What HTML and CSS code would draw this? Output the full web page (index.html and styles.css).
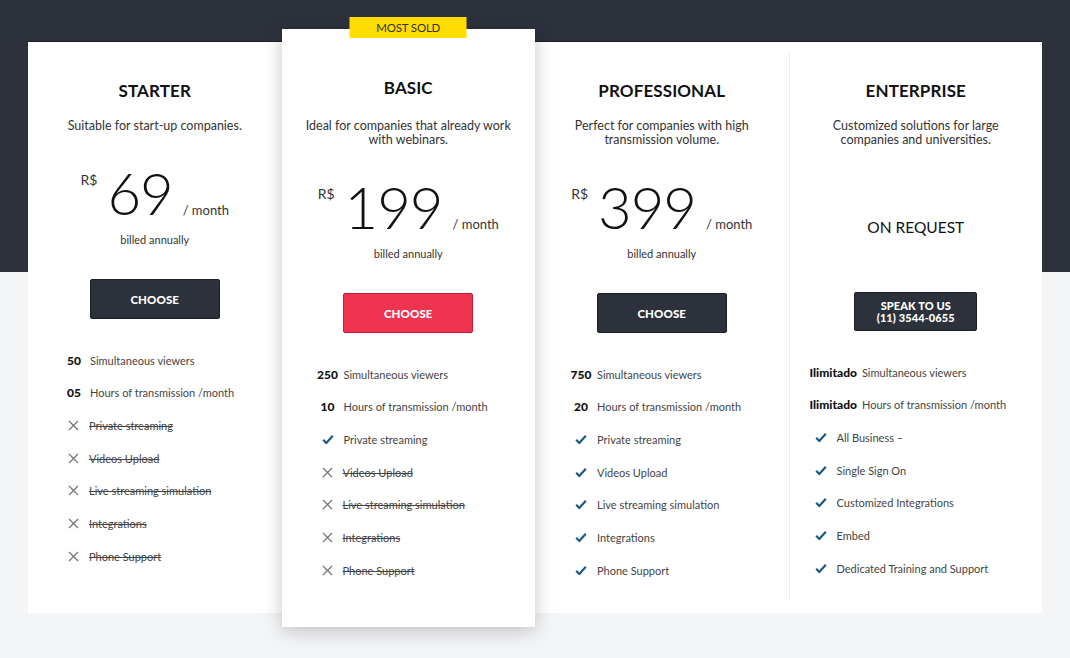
FILE: index.html
```html
<!DOCTYPE html>
<html lang="en">
<head>
<meta charset="utf-8">
<title>Pricing</title>
<link rel="stylesheet" href="styles.css">
</head>
<body>
<div class="page">
  <div class="plans">
    <section class="plan">
      <h2 class="plan-name">STARTER</h2>
      <p class="plan-desc">Suitable for start-up companies.</p>
      <div class="price"><span class="cur">R$</span><span class="amount">69</span><span class="per">/ month</span></div>
      <p class="billing">billed annually</p>
      <a class="btn btn-dark" href="#">CHOOSE</a>
      <ul class="features">
        <li><span class="num">50</span><span>Simultaneous viewers</span></li>
        <li><span class="num">05</span><span>Hours of transmission /month</span></li>
        <li class="off"><svg class="ico" viewBox="0 0 11 11"><path d="M1 1L10 10M10 1L1 10"/></svg><span>Private streaming</span></li>
        <li class="off"><svg class="ico" viewBox="0 0 11 11"><path d="M1 1L10 10M10 1L1 10"/></svg><span>Videos Upload</span></li>
        <li class="off"><svg class="ico" viewBox="0 0 11 11"><path d="M1 1L10 10M10 1L1 10"/></svg><span>Live streaming simulation</span></li>
        <li class="off"><svg class="ico" viewBox="0 0 11 11"><path d="M1 1L10 10M10 1L1 10"/></svg><span>Integrations</span></li>
        <li class="off"><svg class="ico" viewBox="0 0 11 11"><path d="M1 1L10 10M10 1L1 10"/></svg><span>Phone Support</span></li>
      </ul>
    </section>

    <section class="plan plan-featured">
      <div class="badge">MOST SOLD</div>
      <h2 class="plan-name">BASIC</h2>
      <p class="plan-desc">Ideal for companies that already work<br>with webinars.</p>
      <div class="price"><span class="cur">R$</span><span class="amount">199</span><span class="per">/ month</span></div>
      <p class="billing">billed annually</p>
      <a class="btn btn-red" href="#">CHOOSE</a>
      <ul class="features">
        <li><span class="num">250</span><span>Simultaneous viewers</span></li>
        <li><span class="num">10</span><span>Hours of transmission /month</span></li>
        <li class="on"><svg class="ico" viewBox="0 0 12 11"><path d="M1.2 5.8L4.3 9L10.8 1.8"/></svg><span>Private streaming</span></li>
        <li class="off"><svg class="ico" viewBox="0 0 11 11"><path d="M1 1L10 10M10 1L1 10"/></svg><span>Videos Upload</span></li>
        <li class="off"><svg class="ico" viewBox="0 0 11 11"><path d="M1 1L10 10M10 1L1 10"/></svg><span>Live streaming simulation</span></li>
        <li class="off"><svg class="ico" viewBox="0 0 11 11"><path d="M1 1L10 10M10 1L1 10"/></svg><span>Integrations</span></li>
        <li class="off"><svg class="ico" viewBox="0 0 11 11"><path d="M1 1L10 10M10 1L1 10"/></svg><span>Phone Support</span></li>
      </ul>
    </section>

    <section class="plan">
      <h2 class="plan-name">PROFESSIONAL</h2>
      <p class="plan-desc">Perfect for companies with high<br>transmission volume.</p>
      <div class="price"><span class="cur">R$</span><span class="amount">399</span><span class="per">/ month</span></div>
      <p class="billing">billed annually</p>
      <a class="btn btn-dark" href="#">CHOOSE</a>
      <ul class="features">
        <li><span class="num">750</span><span>Simultaneous viewers</span></li>
        <li><span class="num">20</span><span>Hours of transmission /month</span></li>
        <li class="on"><svg class="ico" viewBox="0 0 12 11"><path d="M1.2 5.8L4.3 9L10.8 1.8"/></svg><span>Private streaming</span></li>
        <li class="on"><svg class="ico" viewBox="0 0 12 11"><path d="M1.2 5.8L4.3 9L10.8 1.8"/></svg><span>Videos Upload</span></li>
        <li class="on"><svg class="ico" viewBox="0 0 12 11"><path d="M1.2 5.8L4.3 9L10.8 1.8"/></svg><span>Live streaming simulation</span></li>
        <li class="on"><svg class="ico" viewBox="0 0 12 11"><path d="M1.2 5.8L4.3 9L10.8 1.8"/></svg><span>Integrations</span></li>
        <li class="on"><svg class="ico" viewBox="0 0 12 11"><path d="M1.2 5.8L4.3 9L10.8 1.8"/></svg><span>Phone Support</span></li>
      </ul>
    </section>

    <section class="plan plan-enterprise">
      <h2 class="plan-name">ENTERPRISE</h2>
      <p class="plan-desc">Customized solutions for large<br>companies and universities.</p>
      <div class="on-request">ON REQUEST</div>
      <a class="btn btn-dark btn-contact" href="#">SPEAK TO US<br>(11) 3544-0655</a>
      <ul class="features">
        <li><span class="num">Ilimitado</span><span>Simultaneous viewers</span></li>
        <li><span class="num">Ilimitado</span><span>Hours of transmission /month</span></li>
        <li class="on"><svg class="ico" viewBox="0 0 12 11"><path d="M1.2 5.8L4.3 9L10.8 1.8"/></svg><span>All Business –</span></li>
        <li class="on"><svg class="ico" viewBox="0 0 12 11"><path d="M1.2 5.8L4.3 9L10.8 1.8"/></svg><span>Single Sign On</span></li>
        <li class="on"><svg class="ico" viewBox="0 0 12 11"><path d="M1.2 5.8L4.3 9L10.8 1.8"/></svg><span>Customized Integrations</span></li>
        <li class="on"><svg class="ico" viewBox="0 0 12 11"><path d="M1.2 5.8L4.3 9L10.8 1.8"/></svg><span>Embed</span></li>
        <li class="on"><svg class="ico" viewBox="0 0 12 11"><path d="M1.2 5.8L4.3 9L10.8 1.8"/></svg><span>Dedicated Training and Support</span></li>
      </ul>
    </section>
  </div>
</div>
</body>
</html>
```

FILE: styles.css
```css
* { box-sizing: border-box; }

html, body {
  margin: 0;
  padding: 0;
}

body {
  font-family: "Lato", "Noto Sans", "Liberation Sans", sans-serif;
  color: #222;
  background: #f4f5f7;
}

.page {
  min-height: 658px;
  padding-top: 42px;
  background: linear-gradient(#2c313c 0, #2c313c 272px, #f4f5f7 272px);
}

.plans {
  width: 1014px;
  margin: 0 auto;
  display: grid;
  grid-template-columns: repeat(4, 1fr);
  background: #fff;
  box-shadow: 0 -1px 0 #1b1f27;
}

.plan {
  display: flex;
  flex-direction: column;
  align-items: center;
  padding: 39px 0 26px;
  text-align: center;
  min-width: 0;
}

.plan-featured {
  position: relative;
  z-index: 1;
  margin: -13px 0 -14px;
  padding: 49px 0 40px;
  background: #fff;
  box-shadow: 0 4px 18px rgba(0, 0, 0, 0.22);
}

.plan-enterprise {
  margin: 10px 0 12px;
  padding-top: 29px;
  padding-bottom: 14px;
  border-left: 1px solid #ededed;
}

.badge {
  position: absolute;
  top: -12px;
  left: 50%;
  transform: translateX(-50%);
  width: 117px;
  height: 21px;
  background: #ffdd00;
  color: #333;
  font-size: 11.5px;
  line-height: 21px;
  text-align: center;
  letter-spacing: -0.2px;
}

.plan-name {
  margin: 0;
  font-size: 17px;
  line-height: 20px;
  font-weight: 700;
  color: #111;
  letter-spacing: 0.1px;
}

.plan-desc {
  margin: 18px 0 0;
  font-size: 12.5px;
  line-height: 14px;
  color: #333;
}

.plan-featured .plan-desc {
  margin-top: 21px;
}

.price {
  display: flex;
  justify-content: center;
  align-items: baseline;
  margin-top: 31px;
  height: 58px;
}

.cur {
  align-self: flex-start;
  margin-top: 8px;
  font-size: 14px;
  line-height: 16px;
  color: #333;
  margin-right: 10px;
}

.amount {
  font-size: 58px;
  line-height: 58px;
  font-weight: 300;
  color: #111;
  letter-spacing: -1px;
}

.per {
  font-size: 13px;
  line-height: 16px;
  color: #333;
  margin-left: 10px;
}

.billing {
  margin: 11px 0 0;
  font-size: 11px;
  line-height: 14px;
  color: #333;
}

.on-request {
  margin-top: 70px;
  margin-bottom: 55px;
  font-size: 15.5px;
  line-height: 20px;
  color: #111;
}

.btn {
  display: flex;
  align-items: center;
  justify-content: center;
  width: 130px;
  height: 40px;
  margin-top: 32px;
  border-radius: 2px;
  color: #fff;
  text-decoration: none;
  font-size: 11.5px;
  font-weight: 900;
  letter-spacing: 0.1px;
}

.btn-dark {
  background: #2c313c;
  border: 1px solid #1b1f27;
}

.btn-red {
  background: #ef3350;
  border: 1px solid #c91d38;
}

.btn-contact {
  width: 123px;
  height: 39px;
  margin-top: 0;
  font-size: 11px;
  line-height: 12px;
}

.features {
  list-style: none;
  margin: 25px 0 0;
  padding: 0 0 0 35px;
  align-self: stretch;
  text-align: left;
}

.plan-enterprise .features {
  padding-left: 20px;
}

.features li {
  display: flex;
  align-items: center;
  height: 32.67px;
  font-size: 11px;
  color: #444;
  white-space: nowrap;
}

.num {
  min-width: 22px;
  margin-right: 5px;
  text-align: center;
  font-size: 12px;
  font-weight: 900;
  color: #111;
}

.ico {
  flex: none;
  width: 11px;
  height: 11px;
  margin: 0 10px 0 5px;
  fill: none;
}

.off .ico {
  stroke: #777;
  stroke-width: 1.3;
}

.on .ico {
  width: 12px;
  stroke: #1c5a86;
  stroke-width: 2.2;
  stroke-linejoin: round;
}

.off span {
  text-decoration: line-through;
  color: #444;
}
```
